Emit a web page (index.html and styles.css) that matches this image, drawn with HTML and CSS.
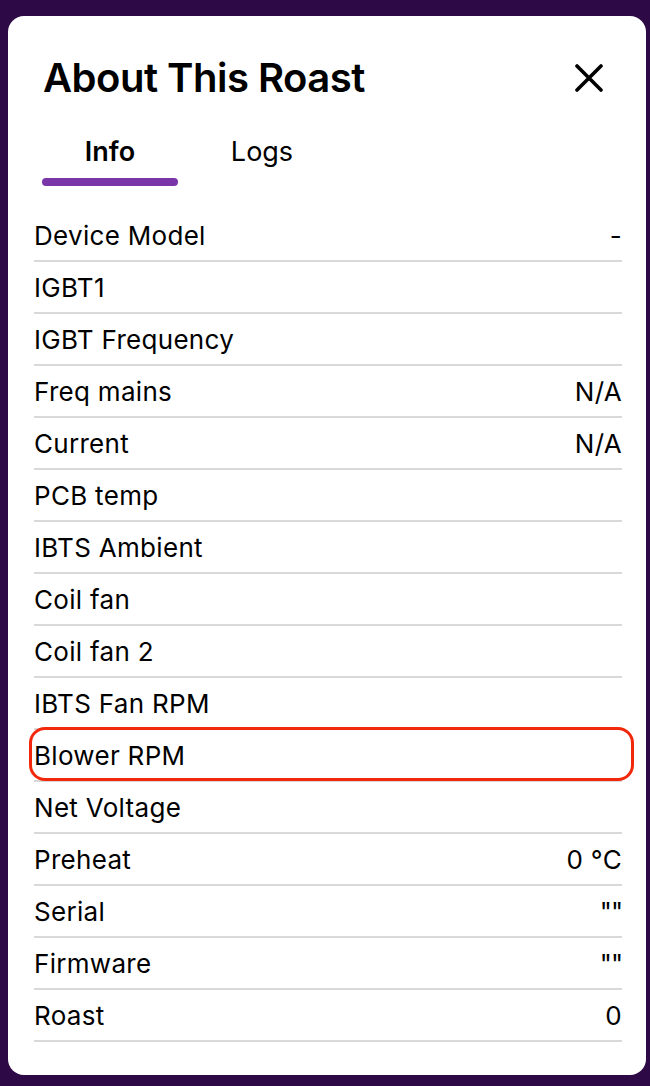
FILE: index.html
```html
<!DOCTYPE html>
<html lang="en">
<head>
<meta charset="utf-8">
<title>About This Roast</title>
<link rel="stylesheet" href="styles.css">
</head>
<body>
<div class="card">
  <div class="header">
    <h1 class="title">About This Roast</h1>
    <button class="close" aria-label="Close">
      <svg width="28" height="28" viewBox="0 0 28 28"><path d="M2 2 L26 26 M26 2 L2 26" stroke="#000" stroke-width="3.6" stroke-linecap="round" fill="none"/></svg>
    </button>
  </div>
  <div class="tabs">
    <div class="tab active"><span class="tab-label">Info</span><span class="tab-bar"></span></div>
    <div class="tab"><span class="tab-label">Logs</span><span class="tab-bar"></span></div>
  </div>
  <div class="rows">
    <div class="row"><span>Device Model</span><span>-</span></div>
    <div class="row"><span>IGBT1</span><span></span></div>
    <div class="row"><span>IGBT Frequency</span><span></span></div>
    <div class="row"><span>Freq mains</span><span>N/A</span></div>
    <div class="row"><span>Current</span><span>N/A</span></div>
    <div class="row"><span>PCB temp</span><span></span></div>
    <div class="row"><span>IBTS Ambient</span><span></span></div>
    <div class="row"><span>Coil fan</span><span></span></div>
    <div class="row"><span>Coil fan 2</span><span></span></div>
    <div class="row"><span>IBTS Fan RPM</span><span></span></div>
    <div class="row highlight"><span>Blower RPM</span><span></span></div>
    <div class="row"><span>Net Voltage</span><span></span></div>
    <div class="row"><span>Preheat</span><span>0 °C</span></div>
    <div class="row"><span>Serial</span><span class="quote">""</span></div>
    <div class="row"><span>Firmware</span><span class="quote">""</span></div>
    <div class="row"><span>Roast</span><span>0</span></div>
  </div>
</div>
</body>
</html>
```
FILE: styles.css
```css
* { box-sizing: border-box; }
html, body { margin: 0; }
body {
  background: #2d0a46;
  padding: 16px 4px 0 8px;
  font-family: Inter, "Noto Sans", sans-serif;
  color: #000;
  height: 1086px;
  overflow: hidden;
}
.card {
  background: #fff;
  border-radius: 16px;
  padding: 34px 24px 33px 26px;
  width: 638px;
}
.header {
  display: flex;
  justify-content: space-between;
  align-items: flex-start;
}
.title {
  margin: 4px 0 0 9px;
  font-size: 40px;
  line-height: 48px;
  font-weight: 600;
  letter-spacing: -0.5px;
}
.close {
  background: none;
  border: 0;
  padding: 0;
  margin: 14px 19px 0 0;
  width: 28px;
  height: 28px;
  display: block;
}
.close svg { display: block; }
.tabs {
  display: flex;
  gap: 16px;
  margin: 34px 0 24px 8px;
}
.tab {
  width: 136px;
  display: flex;
  flex-direction: column;
  align-items: center;
}
.tab-label {
  font-size: 27px;
  line-height: 32px;
  font-weight: 400;
  margin-bottom: 10px;
}
.tab.active .tab-label { font-weight: 600; }
.tab-bar {
  width: 136px;
  height: 8px;
  border-radius: 4px;
}
.tab.active .tab-bar { background: #7a35a8; }
.row {
  position: relative;
  height: 52px;
  border-bottom: 2px solid #d9d9d9;
  display: flex;
  justify-content: space-between;
  align-items: center;
  padding-top: 1px;
  font-size: 26px;
  letter-spacing: 0.3px;
}
.quote { letter-spacing: -1px; }
.highlight::after {
  content: "";
  position: absolute;
  top: -3px;
  bottom: -1px;
  left: -5px;
  right: -12px;
  border: 3px solid #f2280c;
  border-radius: 16px;
}
```
